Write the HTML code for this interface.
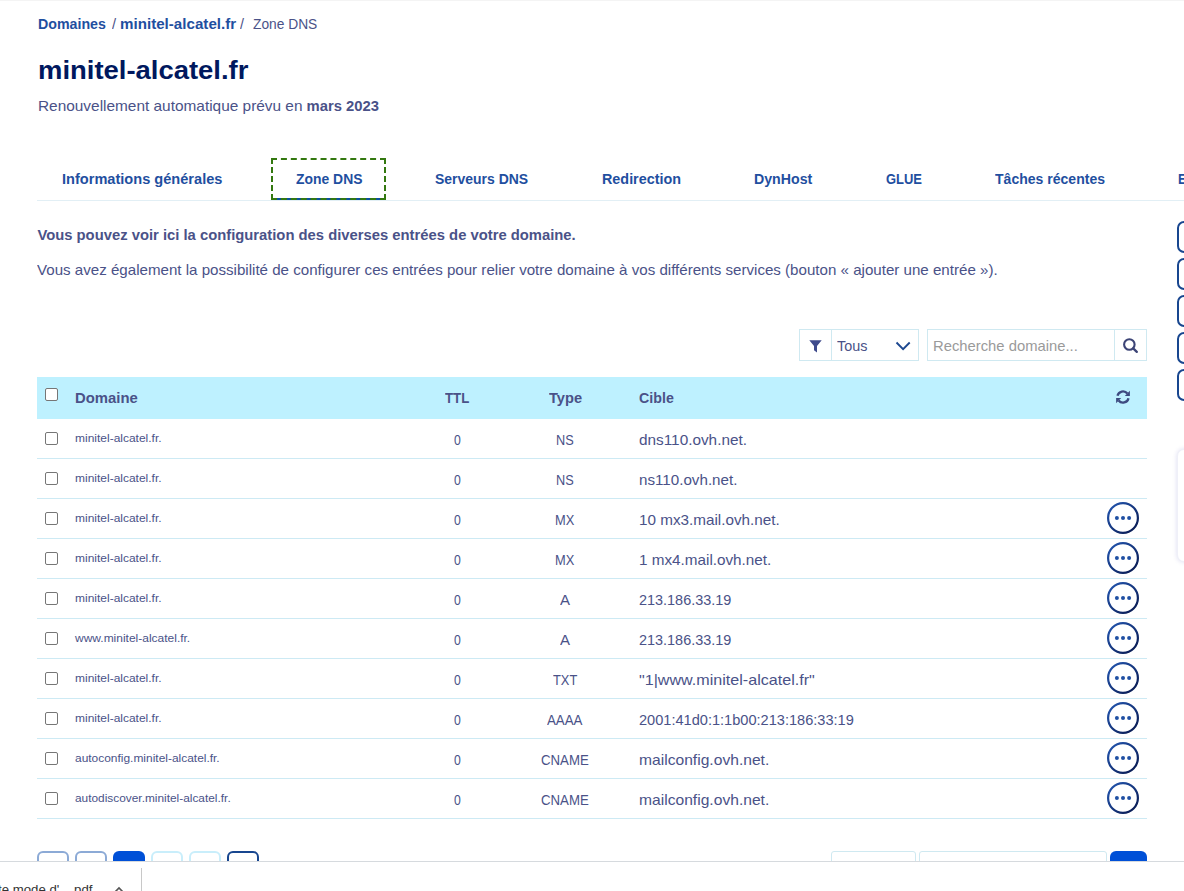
<!DOCTYPE html>
<html lang="fr"><head><meta charset="utf-8"><title>Zone DNS - minitel-alcatel.fr</title>
<style>
html,body{margin:0;padding:0;background:#fff;}
body{width:1184px;height:891px;position:relative;overflow:hidden;font-family:"Liberation Sans",sans-serif;}
.t{position:absolute;white-space:pre;line-height:1;transform-origin:0 0;display:block;}
.b{position:absolute;box-sizing:content-box;display:block;}
</style></head>
<body>
<svg width="0" height="0" style="position:absolute"><defs><linearGradient id="g" x1="0" y1="0" x2="1" y2="1"><stop offset="0" stop-color="#2458b4"/><stop offset="1" stop-color="#06154a"/></linearGradient></defs></svg>
<div class="b" style="left:0px;top:0px;width:1184px;height:1px;background:#f4f4f4;"></div>
<div class="b" style="left:37px;top:200px;width:1147px;height:1px;background:#e2eff5;"></div>
<div class="b" style="left:272px;top:198px;width:113px;height:2px;background:#0b4f9e;"></div>
<div class="b" style="left:271px;top:158px;width:111px;height:38px;border:2px dashed #33780f;"></div>
<div class="b" style="left:1177px;top:221px;width:30px;height:27.6px;border:2px solid #18468f;border-radius:7px;"></div>
<div class="b" style="left:1177px;top:258px;width:30px;height:27.6px;border:2px solid #18468f;border-radius:7px;"></div>
<div class="b" style="left:1177px;top:295px;width:30px;height:27.6px;border:2px solid #18468f;border-radius:7px;"></div>
<div class="b" style="left:1177px;top:332px;width:30px;height:27.6px;border:2px solid #18468f;border-radius:7px;"></div>
<div class="b" style="left:1177px;top:369px;width:30px;height:27.6px;border:2px solid #18468f;border-radius:7px;"></div>
<div class="b" style="left:1177px;top:448.5px;width:40px;height:111px;border:1px solid #eff0f8;border-radius:7px;box-shadow:0 0 5px rgba(0,14,156,.14);background:#fff;"></div>
<div class="b" style="left:799px;top:329px;width:118px;height:30px;border:1px solid #cfe9f1;"></div>
<div class="b" style="left:831px;top:330px;width:1px;height:30px;background:#cfe9f1;"></div>
<div class="b" style="left:927px;top:329px;width:218px;height:30px;border:1px solid #cfe9f1;"></div>
<div class="b" style="left:1114px;top:330px;width:1px;height:30px;background:#cfe9f1;"></div>
<div class="b" style="left:37px;top:377px;width:1110px;height:42px;background:#bef1ff;"></div>
<div class="b" style="left:37px;top:458px;width:1110px;height:1px;background:#cdeaf4;"></div>
<div class="b" style="left:37px;top:498px;width:1110px;height:1px;background:#cdeaf4;"></div>
<div class="b" style="left:37px;top:538px;width:1110px;height:1px;background:#cdeaf4;"></div>
<div class="b" style="left:37px;top:578px;width:1110px;height:1px;background:#cdeaf4;"></div>
<div class="b" style="left:37px;top:618px;width:1110px;height:1px;background:#cdeaf4;"></div>
<div class="b" style="left:37px;top:658px;width:1110px;height:1px;background:#cdeaf4;"></div>
<div class="b" style="left:37px;top:698px;width:1110px;height:1px;background:#cdeaf4;"></div>
<div class="b" style="left:37px;top:738px;width:1110px;height:1px;background:#cdeaf4;"></div>
<div class="b" style="left:37px;top:778px;width:1110px;height:1px;background:#cdeaf4;"></div>
<div class="b" style="left:37px;top:818px;width:1110px;height:1px;background:#cdeaf4;"></div>
<div class="b" style="left:45px;top:388px;width:11px;height:11px;border:1px solid #767676;border-radius:2px;background:#fff;"></div>
<div class="b" style="left:45px;top:432px;width:11px;height:11px;border:1px solid #767676;border-radius:2px;background:#fff;"></div>
<div class="b" style="left:45px;top:472px;width:11px;height:11px;border:1px solid #767676;border-radius:2px;background:#fff;"></div>
<div class="b" style="left:45px;top:512px;width:11px;height:11px;border:1px solid #767676;border-radius:2px;background:#fff;"></div>
<div class="b" style="left:45px;top:552px;width:11px;height:11px;border:1px solid #767676;border-radius:2px;background:#fff;"></div>
<div class="b" style="left:45px;top:592px;width:11px;height:11px;border:1px solid #767676;border-radius:2px;background:#fff;"></div>
<div class="b" style="left:45px;top:632px;width:11px;height:11px;border:1px solid #767676;border-radius:2px;background:#fff;"></div>
<div class="b" style="left:45px;top:672px;width:11px;height:11px;border:1px solid #767676;border-radius:2px;background:#fff;"></div>
<div class="b" style="left:45px;top:712px;width:11px;height:11px;border:1px solid #767676;border-radius:2px;background:#fff;"></div>
<div class="b" style="left:45px;top:752px;width:11px;height:11px;border:1px solid #767676;border-radius:2px;background:#fff;"></div>
<div class="b" style="left:45px;top:792px;width:11px;height:11px;border:1px solid #767676;border-radius:2px;background:#fff;"></div>
<div class="b" style="left:37px;top:851px;width:28px;height:28px;border:2px solid #8caad6;border-radius:6px;"></div>
<div class="b" style="left:75px;top:851px;width:28px;height:28px;border:2px solid #8caad6;border-radius:6px;"></div>
<div class="b" style="left:113px;top:851px;width:32px;height:32px;background:#0050d7;border-radius:6px;"></div>
<div class="b" style="left:151px;top:851px;width:28px;height:28px;border:2px solid #c9eefb;border-radius:6px;"></div>
<div class="b" style="left:189px;top:851px;width:28px;height:28px;border:2px solid #c9eefb;border-radius:6px;"></div>
<div class="b" style="left:227px;top:851px;width:28px;height:28px;border:2px solid #18468f;border-radius:6px;"></div>
<div class="b" style="left:831px;top:851px;width:83px;height:30px;border:1px solid #cfe9f1;border-radius:3px;"></div>
<div class="b" style="left:919px;top:851px;width:186px;height:30px;border:1px solid #cfe9f1;border-radius:3px;"></div>
<div class="b" style="left:1110px;top:851px;width:37px;height:32px;background:#0050d7;border-radius:6px;"></div>
<div class="b" style="left:0px;top:861px;width:1184px;height:30px;background:#fff;border-top:1px solid #d6dade;"></div>
<div class="b" style="left:141px;top:868px;width:1px;height:23px;background:#c8c8c8;"></div>
<svg class="b" style="left:809px;top:339.5px" width="13" height="13" viewBox="0 0 13 13"><path d="M0.3 0.3h12.4l-4.7 5.6v6.6l-3-2.3v-4.3z" fill="#3f4b8c"/></svg>
<svg class="b" style="left:895px;top:340px" width="17" height="12" viewBox="0 0 17 12"><path d="M1.5 2.5L8.1 9.1L14.7 2.5" fill="none" stroke="#1d4890" stroke-width="1.9" stroke-linejoin="miter"/></svg>
<svg class="b" style="left:1122px;top:337px" width="17" height="17" viewBox="0 0 17 17"><circle cx="7.35" cy="7.5" r="5.25" fill="none" stroke="#3c4476" stroke-width="2.1"/><path d="M11.2 11.4l3.6 3.5" stroke="#3c4476" stroke-width="2.3" stroke-linecap="round"/></svg>
<svg class="b" style="left:1116px;top:390px" width="14" height="14" viewBox="0 0 14 14"><g id="rf" fill="#3d4a80"><path d="M1.5 5.8A5.6 5.6 0 0 1 11.4 3.55" fill="none" stroke="#3d4a80" stroke-width="2.3"/><path d="M13.9 0.8v5.1h-5.1z"/></g><use href="#rf" transform="rotate(180 7 7)"/></svg>
<svg class="b" style="left:1107px;top:502px" width="32" height="32" viewBox="0 0 32 32"><circle cx="16" cy="16" r="14.9" fill="#fff" stroke="url(#g)" stroke-width="2.2"/><circle cx="9.9" cy="16" r="2" fill="#1f4fa3"/><circle cx="16" cy="16" r="2" fill="#1f4fa3"/><circle cx="22.1" cy="16" r="2" fill="#1f4fa3"/></svg>
<svg class="b" style="left:1107px;top:542px" width="32" height="32" viewBox="0 0 32 32"><circle cx="16" cy="16" r="14.9" fill="#fff" stroke="url(#g)" stroke-width="2.2"/><circle cx="9.9" cy="16" r="2" fill="#1f4fa3"/><circle cx="16" cy="16" r="2" fill="#1f4fa3"/><circle cx="22.1" cy="16" r="2" fill="#1f4fa3"/></svg>
<svg class="b" style="left:1107px;top:582px" width="32" height="32" viewBox="0 0 32 32"><circle cx="16" cy="16" r="14.9" fill="#fff" stroke="url(#g)" stroke-width="2.2"/><circle cx="9.9" cy="16" r="2" fill="#1f4fa3"/><circle cx="16" cy="16" r="2" fill="#1f4fa3"/><circle cx="22.1" cy="16" r="2" fill="#1f4fa3"/></svg>
<svg class="b" style="left:1107px;top:622px" width="32" height="32" viewBox="0 0 32 32"><circle cx="16" cy="16" r="14.9" fill="#fff" stroke="url(#g)" stroke-width="2.2"/><circle cx="9.9" cy="16" r="2" fill="#1f4fa3"/><circle cx="16" cy="16" r="2" fill="#1f4fa3"/><circle cx="22.1" cy="16" r="2" fill="#1f4fa3"/></svg>
<svg class="b" style="left:1107px;top:662px" width="32" height="32" viewBox="0 0 32 32"><circle cx="16" cy="16" r="14.9" fill="#fff" stroke="url(#g)" stroke-width="2.2"/><circle cx="9.9" cy="16" r="2" fill="#1f4fa3"/><circle cx="16" cy="16" r="2" fill="#1f4fa3"/><circle cx="22.1" cy="16" r="2" fill="#1f4fa3"/></svg>
<svg class="b" style="left:1107px;top:702px" width="32" height="32" viewBox="0 0 32 32"><circle cx="16" cy="16" r="14.9" fill="#fff" stroke="url(#g)" stroke-width="2.2"/><circle cx="9.9" cy="16" r="2" fill="#1f4fa3"/><circle cx="16" cy="16" r="2" fill="#1f4fa3"/><circle cx="22.1" cy="16" r="2" fill="#1f4fa3"/></svg>
<svg class="b" style="left:1107px;top:742px" width="32" height="32" viewBox="0 0 32 32"><circle cx="16" cy="16" r="14.9" fill="#fff" stroke="url(#g)" stroke-width="2.2"/><circle cx="9.9" cy="16" r="2" fill="#1f4fa3"/><circle cx="16" cy="16" r="2" fill="#1f4fa3"/><circle cx="22.1" cy="16" r="2" fill="#1f4fa3"/></svg>
<svg class="b" style="left:1107px;top:782px" width="32" height="32" viewBox="0 0 32 32"><circle cx="16" cy="16" r="14.9" fill="#fff" stroke="url(#g)" stroke-width="2.2"/><circle cx="9.9" cy="16" r="2" fill="#1f4fa3"/><circle cx="16" cy="16" r="2" fill="#1f4fa3"/><circle cx="22.1" cy="16" r="2" fill="#1f4fa3"/></svg>
<svg class="b" style="left:113px;top:886px" width="12" height="8" viewBox="0 0 12 8"><path d="M1.5 6.5l4.5-4.5 4.5 4.5" fill="none" stroke="#555" stroke-width="1.6"/></svg>
<span class="t" style="left:38.1px;top:16.6px;font-size:14.8px;color:#1f4fa0;font-weight:700;transform:scaleX(0.9601);">Domaines</span>
<span class="t" style="left:111.9px;top:16.6px;font-size:14.8px;color:#4a5288;transform:scaleX(0.9939);">/</span>
<span class="t" style="left:120.0px;top:16.6px;font-size:14.8px;color:#1f4fa0;font-weight:700;transform:scaleX(1.0239);">minitel-alcatel.fr</span>
<span class="t" style="left:240.3px;top:16.6px;font-size:14.8px;color:#4a5288;transform:scaleX(0.9697);">/</span>
<span class="t" style="left:253.0px;top:16.6px;font-size:14.8px;color:#4a5288;transform:scaleX(0.9306);">Zone DNS</span>
<span class="t" style="left:38.0px;top:56.6px;font-size:26.4px;color:#00185e;font-weight:700;transform:scaleX(1.0396);">minitel-alcatel.fr</span>
<span class="t" style="left:38.0px;top:99.1px;font-size:14.8px;color:#4a5288;transform:scaleX(1.0406);">Renouvellement automatique prévu en</span>
<span class="t" style="left:306.5px;top:99.1px;font-size:14.8px;color:#4a5288;font-weight:700;">mars 2023</span>
<span class="t" style="left:61.8px;top:172.4px;font-size:14.8px;color:#1f4fa0;font-weight:700;transform:scaleX(0.9852);">Informations générales</span>
<span class="t" style="left:295.5px;top:172.4px;font-size:14.8px;color:#1f4fa0;font-weight:700;transform:scaleX(0.9406);">Zone DNS</span>
<span class="t" style="left:434.8px;top:172.4px;font-size:14.8px;color:#1f4fa0;font-weight:700;transform:scaleX(0.9442);">Serveurs DNS</span>
<span class="t" style="left:601.5px;top:172.4px;font-size:14.8px;color:#1f4fa0;font-weight:700;transform:scaleX(0.9704);">Redirection</span>
<span class="t" style="left:754.3px;top:172.4px;font-size:14.8px;color:#1f4fa0;font-weight:700;transform:scaleX(0.9582);">DynHost</span>
<span class="t" style="left:885.6px;top:172.4px;font-size:14.8px;color:#1f4fa0;font-weight:700;transform:scaleX(0.8757);">GLUE</span>
<span class="t" style="left:994.5px;top:172.4px;font-size:14.8px;color:#1f4fa0;font-weight:700;transform:scaleX(0.9484);">Tâches récentes</span>
<span class="t" style="left:1177.5px;top:172.4px;font-size:14.8px;color:#1f4fa0;font-weight:700;transform:scaleX(0.8608);">E</span>
<span class="t" style="left:37.4px;top:227.7px;font-size:14.8px;color:#4a5288;font-weight:700;">Vous pouvez voir ici la configuration des diverses entrées de votre domaine.</span>
<span class="t" style="left:37.4px;top:263.4px;font-size:14.8px;color:#4a5288;transform:scaleX(1.0212);">Vous avez également la possibilité de configurer ces entrées pour relier votre domaine à vos différents services (bouton « ajouter une entrée »).</span>
<span class="t" style="left:837.3px;top:338.8px;font-size:14.8px;color:#4a5288;transform:scaleX(0.9723);">Tous</span>
<span class="t" style="left:933.0px;top:338.8px;font-size:14.8px;color:#9a9a9a;">Recherche domaine...</span>
<span class="t" style="left:74.8px;top:390.6px;font-size:14.8px;color:#4a5288;font-weight:700;transform:scaleX(1.0048);">Domaine</span>
<span class="t" style="left:444.6px;top:390.6px;font-size:14.8px;color:#4a5288;font-weight:700;transform:scaleX(0.8959);">TTL</span>
<span class="t" style="left:548.5px;top:390.6px;font-size:14.8px;color:#4a5288;font-weight:700;transform:scaleX(0.9899);">Type</span>
<span class="t" style="left:639.2px;top:390.6px;font-size:14.8px;color:#4a5288;font-weight:700;transform:scaleX(0.9617);">Cible</span>
<span class="t" style="left:74.8px;top:433.2px;font-size:11.8px;color:#4a5288;transform:scaleX(1.0160);">minitel-alcatel.fr.</span>
<span class="t" style="left:453.7px;top:432.8px;font-size:14.8px;color:#4a5288;transform:scaleX(0.8258);">0</span>
<span class="t" style="left:556.1px;top:432.8px;font-size:14.8px;color:#4a5288;transform:scaleX(0.8608);">NS</span>
<span class="t" style="left:639.2px;top:432.8px;font-size:14.8px;color:#4a5288;transform:scaleX(1.0363);">dns110.ovh.net.</span>
<span class="t" style="left:74.8px;top:473.2px;font-size:11.8px;color:#4a5288;transform:scaleX(1.0160);">minitel-alcatel.fr.</span>
<span class="t" style="left:453.7px;top:472.8px;font-size:14.8px;color:#4a5288;transform:scaleX(0.8258);">0</span>
<span class="t" style="left:556.1px;top:472.8px;font-size:14.8px;color:#4a5288;transform:scaleX(0.8608);">NS</span>
<span class="t" style="left:639.2px;top:472.8px;font-size:14.8px;color:#4a5288;transform:scaleX(1.0252);">ns110.ovh.net.</span>
<span class="t" style="left:74.8px;top:513.2px;font-size:11.8px;color:#4a5288;transform:scaleX(1.0160);">minitel-alcatel.fr.</span>
<span class="t" style="left:453.7px;top:512.8px;font-size:14.8px;color:#4a5288;transform:scaleX(0.8258);">0</span>
<span class="t" style="left:555.4px;top:512.8px;font-size:14.8px;color:#4a5288;transform:scaleX(0.8692);">MX</span>
<span class="t" style="left:639.2px;top:512.8px;font-size:14.8px;color:#4a5288;transform:scaleX(1.0313);">10 mx3.mail.ovh.net.</span>
<span class="t" style="left:74.8px;top:553.2px;font-size:11.8px;color:#4a5288;transform:scaleX(1.0160);">minitel-alcatel.fr.</span>
<span class="t" style="left:453.7px;top:552.8px;font-size:14.8px;color:#4a5288;transform:scaleX(0.8258);">0</span>
<span class="t" style="left:555.4px;top:552.8px;font-size:14.8px;color:#4a5288;transform:scaleX(0.8692);">MX</span>
<span class="t" style="left:639.2px;top:552.8px;font-size:14.8px;color:#4a5288;transform:scaleX(1.0312);">1 mx4.mail.ovh.net.</span>
<span class="t" style="left:74.8px;top:593.2px;font-size:11.8px;color:#4a5288;transform:scaleX(1.0160);">minitel-alcatel.fr.</span>
<span class="t" style="left:453.7px;top:592.8px;font-size:14.8px;color:#4a5288;transform:scaleX(0.8258);">0</span>
<span class="t" style="left:560.0px;top:592.8px;font-size:14.8px;color:#4a5288;transform:scaleX(1.0127);">A</span>
<span class="t" style="left:639.2px;top:592.8px;font-size:14.8px;color:#4a5288;transform:scaleX(0.9753);">213.186.33.19</span>
<span class="t" style="left:74.8px;top:633.2px;font-size:11.8px;color:#4a5288;transform:scaleX(1.0157);">www.minitel-alcatel.fr.</span>
<span class="t" style="left:453.7px;top:632.8px;font-size:14.8px;color:#4a5288;transform:scaleX(0.8258);">0</span>
<span class="t" style="left:560.0px;top:632.8px;font-size:14.8px;color:#4a5288;transform:scaleX(1.0127);">A</span>
<span class="t" style="left:639.2px;top:632.8px;font-size:14.8px;color:#4a5288;transform:scaleX(0.9753);">213.186.33.19</span>
<span class="t" style="left:74.8px;top:673.2px;font-size:11.8px;color:#4a5288;transform:scaleX(1.0160);">minitel-alcatel.fr.</span>
<span class="t" style="left:453.7px;top:672.8px;font-size:14.8px;color:#4a5288;transform:scaleX(0.8258);">0</span>
<span class="t" style="left:552.9px;top:672.8px;font-size:14.8px;color:#4a5288;transform:scaleX(0.8693);">TXT</span>
<span class="t" style="left:639.2px;top:672.8px;font-size:14.8px;color:#4a5288;transform:scaleX(1.0882);">"1|www.minitel-alcatel.fr"</span>
<span class="t" style="left:74.8px;top:713.2px;font-size:11.8px;color:#4a5288;transform:scaleX(1.0160);">minitel-alcatel.fr.</span>
<span class="t" style="left:453.7px;top:712.8px;font-size:14.8px;color:#4a5288;transform:scaleX(0.8258);">0</span>
<span class="t" style="left:547.2px;top:712.8px;font-size:14.8px;color:#4a5288;transform:scaleX(0.8991);">AAAA</span>
<span class="t" style="left:639.2px;top:712.8px;font-size:14.8px;color:#4a5288;transform:scaleX(0.9850);">2001:41d0:1:1b00:213:186:33:19</span>
<span class="t" style="left:74.8px;top:753.2px;font-size:11.8px;color:#4a5288;transform:scaleX(1.0122);">autoconfig.minitel-alcatel.fr.</span>
<span class="t" style="left:453.7px;top:752.8px;font-size:14.8px;color:#4a5288;transform:scaleX(0.8258);">0</span>
<span class="t" style="left:541.1px;top:752.8px;font-size:14.8px;color:#4a5288;transform:scaleX(0.8926);">CNAME</span>
<span class="t" style="left:639.2px;top:752.8px;font-size:14.8px;color:#4a5288;transform:scaleX(1.0561);">mailconfig.ovh.net.</span>
<span class="t" style="left:74.8px;top:793.2px;font-size:11.8px;color:#4a5288;transform:scaleX(1.0061);">autodiscover.minitel-alcatel.fr.</span>
<span class="t" style="left:453.7px;top:792.8px;font-size:14.8px;color:#4a5288;transform:scaleX(0.8258);">0</span>
<span class="t" style="left:541.1px;top:792.8px;font-size:14.8px;color:#4a5288;transform:scaleX(0.8926);">CNAME</span>
<span class="t" style="left:639.2px;top:792.8px;font-size:14.8px;color:#4a5288;transform:scaleX(1.0561);">mailconfig.ovh.net.</span>
<span class="t" style="left:-2.5px;top:884.0px;font-size:12px;color:#333333;transform:scaleX(1.1028);">te mode d'....pdf</span>

</body></html>
